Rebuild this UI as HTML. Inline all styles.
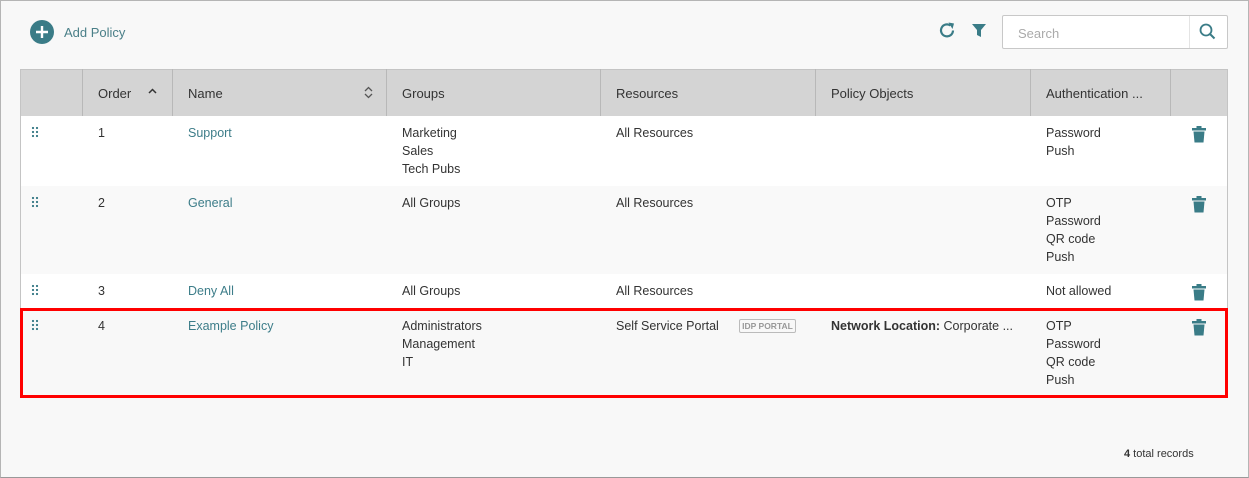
<!DOCTYPE html>
<html><head><meta charset="utf-8"><style>
*{box-sizing:border-box;margin:0;padding:0}
body{width:1249px;height:478px;background:#f8f8f8;font-family:"Liberation Sans",sans-serif;font-size:12.5px;color:#333;position:relative;overflow:hidden}
.frame{position:absolute;left:0;top:0;width:1249px;height:478px;border:1px solid #b5b5b5;border-bottom-color:#999}
.abs{position:absolute}
.teal{color:#3d7d89}
.hdr{position:absolute;left:20px;top:69px;width:1208px;height:47px;background:#d4d4d4;border:1px solid #c4c4c4;border-bottom:none}
.sep{position:absolute;top:69px;height:47px;width:1px;background:#b8b8b8}
.row{position:absolute;left:20px;width:1208px}
.cell{position:absolute;line-height:18px}
.grip{position:absolute;width:8px;height:12px;background-image:radial-gradient(circle,#3d7d89 1px,transparent 1.3px);background-size:4px 4px;background-position:0 0}
.trash{position:absolute;width:16px;height:18px}
</style></head><body>
<div class="frame"></div>
<svg class="abs" style="left:30px;top:20px" width="24" height="24"><circle cx="12" cy="12" r="12" fill="#3a7c87"/><path d="M12 6v12M6 12h12" stroke="#fff" stroke-width="2.4"/></svg>
<div class="abs teal" style="left:64px;top:25px;font-size:13px;color:#4a7f88">Add Policy</div>
<svg class="abs" style="left:938px;top:21px" width="19" height="19" viewBox="0 0 19 19"><path d="M15 9.5A6 6 0 1 1 12.5 4.5" fill="none" stroke="#3a7c87" stroke-width="2.2"/><path d="M10.5 1.5L16 2.5 14.5 8z" fill="#3a7c87"/></svg>
<svg class="abs" style="left:971px;top:23px" width="16" height="15" viewBox="0 0 16 15"><path d="M1 1h14l-5 6v7l-4-2V7z" fill="#3a7c87"/></svg>
<div class="abs" style="left:1002px;top:15px;width:226px;height:34px;background:#fff;border:1px solid #c8c8c8;border-radius:2px"></div>
<div class="abs" style="left:1189px;top:16px;width:1px;height:32px;background:#e4e4e4"></div>
<div class="abs" style="left:1018px;top:26px;color:#aaa;font-size:13px">Search</div>
<svg class="abs" style="left:1199px;top:23px" width="17" height="17" viewBox="0 0 17 17"><circle cx="7" cy="7" r="5.5" fill="none" stroke="#3a7c87" stroke-width="1.8"/><path d="M11 11l4.5 4.5" stroke="#3a7c87" stroke-width="2"/></svg>

<div class="hdr"></div>
<div class="sep" style="left:82px"></div><div class="sep" style="left:172px"></div><div class="sep" style="left:386px"></div><div class="sep" style="left:600px"></div><div class="sep" style="left:815px"></div><div class="sep" style="left:1030px"></div><div class="sep" style="left:1170px"></div>
<div class="abs" style="top:86px;left:98px;font-size:13px">Order</div>
<svg class="abs" style="left:148px;top:88px" width="9" height="6"><path d="M1 5l3.5-3.5L8 5" fill="none" stroke="#333" stroke-width="1.5"/></svg>
<div class="abs" style="top:86px;left:188px;font-size:13px">Name</div>
<svg class="abs" style="left:364px;top:86px" width="9" height="13"><path d="M1 5l3.5-3.5L8 5M1 8l3.5 3.5L8 8" fill="none" stroke="#555" stroke-width="1.3"/></svg>
<div class="abs" style="top:86px;left:402px;font-size:13px">Groups</div>
<div class="abs" style="top:86px;left:616px;font-size:13px">Resources</div>
<div class="abs" style="top:86px;left:831px;font-size:13px">Policy Objects</div>
<div class="abs" style="top:86px;left:1046px;font-size:13px">Authentication ...</div>

<div class="row" style="top:116px;height:70px;background:#fff"></div>
<div class="row" style="top:186px;height:88px;background:#f9f9f9"></div>
<div class="row" style="top:274px;height:34px;background:#fff"></div>
<div class="row" style="top:308px;height:90px;background:#f8f8f8;border:3px solid #f00"></div>
<div class="abs" style="left:20px;top:116px;width:1px;height:192px;background:#c4c4c4"></div>
<div class="abs" style="left:1227px;top:116px;width:1px;height:192px;background:#c4c4c4"></div>

<div class="grip" style="left:31px;top:126px"></div>
<div class="cell" style="left:98px;top:124px">1</div>
<div class="cell teal" style="left:188px;top:124px">Support</div>
<div class="cell" style="left:402px;top:124px">Marketing<br>Sales<br>Tech Pubs</div>
<div class="cell" style="left:616px;top:124px">All Resources</div>
<div class="cell" style="left:1046px;top:124px">Password<br>Push</div>

<div class="grip" style="left:31px;top:196px"></div>
<div class="cell" style="left:98px;top:194px">2</div>
<div class="cell teal" style="left:188px;top:194px">General</div>
<div class="cell" style="left:402px;top:194px">All Groups</div>
<div class="cell" style="left:616px;top:194px">All Resources</div>
<div class="cell" style="left:1046px;top:194px">OTP<br>Password<br>QR code<br>Push</div>

<div class="grip" style="left:31px;top:284px"></div>
<div class="cell" style="left:98px;top:282px">3</div>
<div class="cell teal" style="left:188px;top:282px">Deny All</div>
<div class="cell" style="left:402px;top:282px">All Groups</div>
<div class="cell" style="left:616px;top:282px">All Resources</div>
<div class="cell" style="left:1046px;top:282px">Not allowed</div>

<div class="grip" style="left:31px;top:319px"></div>
<div class="cell" style="left:98px;top:317px">4</div>
<div class="cell teal" style="left:188px;top:317px">Example Policy</div>
<div class="cell" style="left:402px;top:317px">Administrators<br>Management<br>IT</div>
<div class="cell" style="left:616px;top:317px">Self Service Portal</div>
<div class="abs" style="left:739px;top:319px;width:57px;height:14px;border:1px solid #bbb;border-radius:2px;font-size:8.5px;font-weight:bold;color:#999;text-align:center;line-height:12px">IDP PORTAL</div>
<div class="cell" style="left:831px;top:317px"><b>Network Location:</b> Corporate ...</div>
<div class="cell" style="left:1046px;top:317px">OTP<br>Password<br>QR code<br>Push</div>

<svg class="trash" style="left:1191px;top:125px" viewBox="0 0 16 18"><path d="M5.5 1h5v2h-5z M1 3h14v2.5H1z" fill="#3a7c87"/><path d="M2.5 6.5h11l-1 11h-9z" fill="#3a7c87"/></svg>
<svg class="trash" style="left:1191px;top:195px" viewBox="0 0 16 18"><path d="M5.5 1h5v2h-5z M1 3h14v2.5H1z" fill="#3a7c87"/><path d="M2.5 6.5h11l-1 11h-9z" fill="#3a7c87"/></svg>
<svg class="trash" style="left:1191px;top:283px" viewBox="0 0 16 18"><path d="M5.5 1h5v2h-5z M1 3h14v2.5H1z" fill="#3a7c87"/><path d="M2.5 6.5h11l-1 11h-9z" fill="#3a7c87"/></svg>
<svg class="trash" style="left:1191px;top:318px" viewBox="0 0 16 18"><path d="M5.5 1h5v2h-5z M1 3h14v2.5H1z" fill="#3a7c87"/><path d="M2.5 6.5h11l-1 11h-9z" fill="#3a7c87"/></svg>

<div class="abs" style="left:1124px;top:448px;font-size:11px"><b>4</b> total records</div>
</body></html>
